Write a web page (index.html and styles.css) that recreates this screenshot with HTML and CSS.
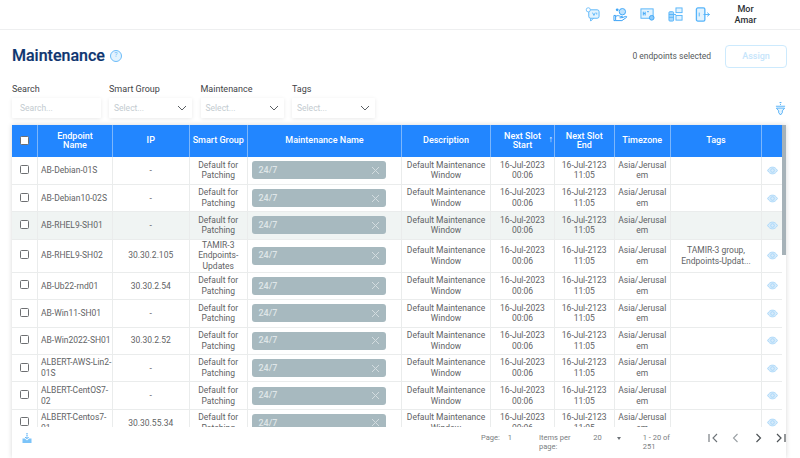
FILE: index.html
```html
<!DOCTYPE html>
<html lang="en">
<head>
<meta charset="utf-8">
<title>Maintenance</title>
<link rel="stylesheet" href="styles.css">
</head>
<body>
<svg class="defs" width="0" height="0" aria-hidden="true">
  <symbol id="eye" viewBox="0 0 12 9"><path d="M.6 4.5C2 2 3.900.8 6 .8s4 1.200 5.400 3.700C10 7 8.100 8.200 6 8.200S2 7 .6 4.500z" fill="#d6ebfb" stroke="#9ed2f8" stroke-width=".8"/><circle cx="6" cy="4.500" r="2" fill="none" stroke="#9ed2f8" stroke-width=".8"/></symbol>
  <symbol id="x" viewBox="0 0 9 9"><path d="M1 1l7 7M8 1L1 8" stroke="#d3dcdf" stroke-width="1" fill="none"/></symbol>
</svg>
<header class="topbar">
  <svg class="ticon" viewBox="0 0 16 16"><rect x="4" y="3" width="11" height="9" rx="2" fill="#e3f3fe" stroke="#55b4fa"/><circle cx="3.500" cy="3" r="2.200" fill="#fff" stroke="#55b4fa" stroke-width=".8"/><path d="M6 12v3l3-3M8 6l1.500 3L11 6M12.500 6v2" fill="none" stroke="#55b4fa"/></svg>
  <svg class="ticon" viewBox="0 0 16 16"><circle cx="10" cy="5" r="3.400" fill="#bfe2fc" stroke="#3ea6f7"/><circle cx="4.500" cy="3" r="1.500" fill="#3ea6f7"/><path d="M1 9h1.800v5.500H1zM3 10c2-1.500 3.500-.5 5 0h2l-1 1.500H7M9.500 11.500l4-1.500c1-.2 1.500.5 1 1l-5 3.500H3" fill="none" stroke="#2f9cf5" stroke-width="1"/></svg>
  <svg class="ticon" viewBox="0 0 16 16"><rect x="1" y="2" width="13" height="10" fill="#e3f3fe" stroke="#55b4fa"/><path d="M3.500 5v4M3.500 7h2M5.500 5v4M7.500 5h2" stroke="#3ea6f7" fill="none"/><circle cx="12.500" cy="11.500" r="2.500" fill="#8ccbfa" stroke="#3ea6f7"/></svg>
  <svg class="ticon" viewBox="0 0 16 16"><rect x="1" y="5" width="5" height="10" rx="1" fill="#a8d8fb" stroke="#55b4fa"/><rect x="8.500" y="1" width="6.500" height="5" fill="#e3f3fe" stroke="#55b4fa"/><rect x="8.500" y="9" width="6.500" height="5" fill="#e3f3fe" stroke="#55b4fa"/><path d="M6 8h2.500M1 8h5M1 11h5" stroke="#55b4fa"/></svg>
  <svg class="ticon" viewBox="0 0 16 16"><rect x="1.500" y="1" width="9" height="14" rx="1.500" fill="#e3f3fe" stroke="#55b4fa" stroke-width="1.400"/><path d="M4.500 6v4M9 8h6.500M13 6l2.500 2-2.500 2" fill="none" stroke="#55b4fa"/></svg>
  <div class="user">Mor Amar</div>
</header>
<main class="page">
  <div class="title-row">
    <h1 class="title">Maintenance</h1>
    <span class="help">?</span>
    <span class="selected">0 endpoints selected</span>
    <button class="assign">Assign</button>
  </div>
  <div class="filter-row">
    <div class="filter filter-search"><label>Search</label><div class="box"><span class="ph ph-search">Search...</span></div></div>
    <div class="filter"><label>Smart Group</label><div class="box"><span class="ph">Select...</span><svg class="chev" viewBox="0 0 10 6"><path d="M1 1l4 4 4-4" fill="none" stroke="#5a5f63"/></svg></div></div>
    <div class="filter"><label>Maintenance</label><div class="box"><span class="ph">Select...</span><svg class="chev" viewBox="0 0 10 6"><path d="M1 1l4 4 4-4" fill="none" stroke="#5a5f63"/></svg></div></div>
    <div class="filter"><label>Tags</label><div class="box"><span class="ph">Select...</span><svg class="chev" viewBox="0 0 10 6"><path d="M1 1l4 4 4-4" fill="none" stroke="#5a5f63"/></svg></div></div>
    <svg class="funnel" viewBox="0 0 12 15"><path d="M5 .5h2M6 2v1" stroke="#3ea6f7"/><path d="M1 4.500h10M1.500 6.500h9L8 9.500v2L6 14l-2-2.500v-2z" fill="#e3f3fe" stroke="#3ea6f7" stroke-width=".9"/></svg>
  </div>
  <section class="card">
    <div class="table-clip">
      <table class="grid">
        <colgroup>
          <col class="c-check"><col class="c-name"><col class="c-ip"><col class="c-group"><col class="c-maint"><col class="c-desc"><col class="c-start"><col class="c-end"><col class="c-tz"><col class="c-tags"><col class="c-act">
        </colgroup>
        <thead>
          <tr>
            <th><span class="hcheck"></span></th>
            <th>Endpoint<br>Name</th><th>IP</th><th>Smart Group</th><th>Maintenance Name</th><th>Description</th>
            <th class="sorted">Next Slot<br>Start<span class="arrow">↑</span></th><th>Next Slot<br>End</th><th>Timezone</th><th>Tags</th><th></th>
          </tr>
        </thead>
        <tbody>
          <tr><td><span class="check"></span></td><td class="left">AB-Debian-01S</td><td>-</td><td>Default for Patching</td><td><div class="chip"><span>24/7</span><svg class="chip-x"><use href="#x"/></svg></div></td><td>Default Maintenance Window</td><td>16-Jul-2023 00:06</td><td>16-Jul-2123 11:05</td><td class="tz">Asia/Jerusalem</td><td></td><td><svg class="eye"><use href="#eye"/></svg></td></tr>
          <tr><td><span class="check"></span></td><td class="left">AB-Debian10-02S</td><td>-</td><td>Default for Patching</td><td><div class="chip"><span>24/7</span><svg class="chip-x"><use href="#x"/></svg></div></td><td>Default Maintenance Window</td><td>16-Jul-2023 00:06</td><td>16-Jul-2123 11:05</td><td class="tz">Asia/Jerusalem</td><td></td><td><svg class="eye"><use href="#eye"/></svg></td></tr>
          <tr class="hl"><td><span class="check"></span></td><td class="left">AB-RHEL9-SH01</td><td>-</td><td>Default for Patching</td><td><div class="chip"><span>24/7</span><svg class="chip-x"><use href="#x"/></svg></div></td><td>Default Maintenance Window</td><td>16-Jul-2023 00:06</td><td>16-Jul-2123 11:05</td><td class="tz">Asia/Jerusalem</td><td></td><td><svg class="eye"><use href="#eye"/></svg></td></tr>
          <tr><td><span class="check"></span></td><td class="left">AB-RHEL9-SH02</td><td>30.30.2.105</td><td>TAMIR-3 Endpoints-Updates</td><td><div class="chip"><span>24/7</span><svg class="chip-x"><use href="#x"/></svg></div></td><td>Default Maintenance Window</td><td>16-Jul-2023 00:06</td><td>16-Jul-2123 11:05</td><td class="tz">Asia/Jerusalem</td><td>TAMIR-3 group, Endpoints-Updat...</td><td><svg class="eye"><use href="#eye"/></svg></td></tr>
          <tr><td><span class="check"></span></td><td class="left">AB-Ub22-rnd01</td><td>30.30.2.54</td><td>Default for Patching</td><td><div class="chip"><span>24/7</span><svg class="chip-x"><use href="#x"/></svg></div></td><td>Default Maintenance Window</td><td>16-Jul-2023 00:06</td><td>16-Jul-2123 11:05</td><td class="tz">Asia/Jerusalem</td><td></td><td><svg class="eye"><use href="#eye"/></svg></td></tr>
          <tr><td><span class="check"></span></td><td class="left">AB-Win11-SH01</td><td>-</td><td>Default for Patching</td><td><div class="chip"><span>24/7</span><svg class="chip-x"><use href="#x"/></svg></div></td><td>Default Maintenance Window</td><td>16-Jul-2023 00:06</td><td>16-Jul-2123 11:05</td><td class="tz">Asia/Jerusalem</td><td></td><td><svg class="eye"><use href="#eye"/></svg></td></tr>
          <tr><td><span class="check"></span></td><td class="left">AB-Win2022-SH01</td><td>30.30.2.52</td><td>Default for Patching</td><td><div class="chip"><span>24/7</span><svg class="chip-x"><use href="#x"/></svg></div></td><td>Default Maintenance Window</td><td>16-Jul-2023 00:06</td><td>16-Jul-2123 11:05</td><td class="tz">Asia/Jerusalem</td><td></td><td><svg class="eye"><use href="#eye"/></svg></td></tr>
          <tr><td><span class="check"></span></td><td class="left">ALBERT-AWS-Lin2-01S</td><td>-</td><td>Default for Patching</td><td><div class="chip"><span>24/7</span><svg class="chip-x"><use href="#x"/></svg></div></td><td>Default Maintenance Window</td><td>16-Jul-2023 00:06</td><td>16-Jul-2123 11:05</td><td class="tz">Asia/Jerusalem</td><td></td><td><svg class="eye"><use href="#eye"/></svg></td></tr>
          <tr><td><span class="check"></span></td><td class="left">ALBERT-CentOS7-02</td><td>-</td><td>Default for Patching</td><td><div class="chip"><span>24/7</span><svg class="chip-x"><use href="#x"/></svg></div></td><td>Default Maintenance Window</td><td>16-Jul-2023 00:06</td><td>16-Jul-2123 11:05</td><td class="tz">Asia/Jerusalem</td><td></td><td><svg class="eye"><use href="#eye"/></svg></td></tr>
          <tr><td><span class="check"></span></td><td class="left">ALBERT-Centos7-01</td><td>30.30.55.34</td><td>Default for Patching</td><td><div class="chip"><span>24/7</span><svg class="chip-x"><use href="#x"/></svg></div></td><td>Default Maintenance Window</td><td>16-Jul-2023 00:06</td><td>16-Jul-2123 11:05</td><td class="tz">Asia/Jerusalem</td><td></td><td><svg class="eye"><use href="#eye"/></svg></td></tr>
        </tbody>
      </table>
      <div class="scrollbar"></div>
    </div>
    <footer class="pager">
      <svg class="export" viewBox="0 0 10 10"><path d="M5 0v5.500M3.300 4L5 6l1.700-2" fill="none" stroke="#3ea6f7" stroke-dasharray="1.300 .5"/><path d="M.5 5.500h2.500l2 2 2-2h2.500V10H.5z" fill="#7cc4f9"/></svg>
      <span class="pg-page">Page:</span><span class="pg-num">1</span>
      <span class="pg-items">Items per page:</span><span class="pg-size">20</span><span class="pg-caret"></span>
      <span class="pg-range">1 - 20 of 251</span>
      <div class="pg-nav">
        <svg viewBox="0 0 11 10"><path d="M1 1v8M9 1L5 5l4 4" fill="none" stroke="#6d7378" stroke-width="1.100"/></svg>
        <svg viewBox="0 0 11 10"><path d="M7.500 1L3.500 5l4 4" fill="none" stroke="#9aa0a4" stroke-width="1.100"/></svg>
        <svg viewBox="0 0 11 10"><path d="M3.500 1l4 4-4 4" fill="none" stroke="#4d5256" stroke-width="1.200"/></svg>
        <svg viewBox="0 0 11 10"><path d="M2 1l4 4-4 4M10 1v8" fill="none" stroke="#4d5256" stroke-width="1.200"/></svg>
      </div>
    </footer>
  </section>
</main>
</body>
</html>
```

FILE: styles.css
```css
* { box-sizing: border-box; }
html, body { margin: 0; height: 100%; overflow: hidden; background: #fff; }
body { font-family: Roboto, "Liberation Sans", sans-serif; color: #5b5f62; font-size: 8.5px; }
.defs { position: absolute; }

.topbar { height: 30px; display: flex; align-items: center; border-bottom: 1px solid #eeeff0; padding-left: 585px; }
.ticon { width: 15px; height: 15px; margin-right: 12.500px; flex: none; }
.user { width: 36px; margin-left: 5px; text-align: center; font-size: 9px; font-weight: 500; line-height: 10.500px; color: #2b2f33; }

.page { padding: 0 14px 0 12px; }
.title-row { height: 52px; display: flex; align-items: center; }
.title { margin: 0; font-size: 16px; line-height: 20px; font-weight: 500; color: #0e3570; -webkit-text-stroke: .2px #0e3570; }
.help { width: 12px; height: 12px; margin-left: 5px; border-radius: 50%; border: 1.500px solid #6cbcf9; background: #e3f3fe; color: #6cbcf9; font-size: 7px; line-height: 9px; text-align: center; }
.selected { margin-left: auto; margin-right: 14px; font-size: 8.500px; color: #55595c; }
.assign { width: 62px; height: 23px; border: 1px solid #cdeafd; border-radius: 4px; background: #fff; color: #c6e5fb; font: 500 9px Roboto, sans-serif; margin-right: -1px; padding: 0; }

.filter-row { display: flex; gap: 8.500px; height: 43px; position: relative; }
.filter { width: 83px; display: flex; flex-direction: column; }
.filter-search { width: 88.500px; }
.filter label { font-size: 9px; line-height: 12px; height: 16px; padding-top: 1px; color: #3f4347; }
.box { height: 20px; background: #fff; box-shadow: 0 1px 4px rgba(0,0,0,.09); display: flex; align-items: center; justify-content: space-between; padding: 0 5px; border-radius: 1px; }
.ph { font-size: 8.500px; color: #c3cbd0; }
.ph-search { padding-left: 3px; }
.chev { width: 10px; height: 6px; }
.funnel { position: absolute; right: 0; top: 20px; width: 11px; height: 14px; }

.card { box-shadow: 0 0 5px rgba(0,0,0,.16); height: 333px; }
.table-clip { height: 302px; overflow: hidden; position: relative; padding-right: 4px; }
.grid { width: 770px; table-layout: fixed; border-collapse: collapse; }
.c-check { width: 25.500px; } .c-name { width: 75px; } .c-ip { width: 76.500px; } .c-group { width: 58.500px; }
.c-maint { width: 154px; } .c-desc { width: 89px; } .c-start { width: 64px; } .c-end { width: 59.500px; }
.c-tz { width: 56.500px; } .c-tags { width: 91px; } .c-act { width: 20.500px; }

.grid th { background: #2286ff; color: #fff; height: 32px; font-size: 9px; font-weight: 500; line-height: 9.500px; padding: 0 3px; border-left: 1px solid #7db6fb; position: relative; }
.grid th:first-child { border-left: 0; }
.sorted .arrow { position: absolute; right: 1px; top: 10px; font-size: 9px; }
.grid td { height: 27.400px; padding: 0 4px; text-align: center; line-height: 10.700px; border: 1px solid #eaecec; border-top: 0; color: #5f6365; overflow: hidden; }
.grid td:first-child { border-left: 0; }
.grid td:last-child { border-right: 0; padding: 0; }
.grid td.left { text-align: left; padding: 0 0 0 3px; }
.grid td.tz { word-break: break-all; padding: 0 3px; }
.hl td { background: #f0f4f3; }
.check, .hcheck { display: block; width: 9px; height: 9px; margin: 0 auto 2px; border: 1px solid #6d6f72; border-radius: 1.500px; background: #fff; }
.chip { height: 18px; margin: 0 -1px 0 0; background: #a7b9bf; border-radius: 3px; display: flex; align-items: center; justify-content: space-between; padding: 0 6px 0 6.500px; color: #dfe6e8; font-size: 9px; font-weight: 500; width: 134px; }
.chip-x { width: 9px; height: 9px; }
.eye { display: block; width: 11px; height: 9px; margin: 0 auto; }
.scrollbar { position: absolute; right: 0; top: 0; width: 4px; height: 130px; background: #a6b2b8; }

.pager { height: 31px; position: relative; display: flex; align-items: flex-start; padding-top: 4px; font-size: 7.500px; color: #7a7e81; }
.export { width: 10px; height: 10px; margin: 2px 0 0 10px; flex: none; }
.pg-page { margin-left: 449px; margin-top: 2px; }
.pg-num { margin-left: 8px; margin-top: 2px; }
.pg-items { margin-left: 27px; margin-top: 2px; }
.pg-size { margin-left: 5px; margin-top: 2px; }
.pg-caret { margin: 6px 0 0 15px; border: 2.500px solid transparent; border-top: 3px solid #6d7378; border-bottom: 0; }
.pg-range { margin-left: 22px; margin-top: 2px; }
.pg-nav { display: flex; gap: 11.500px; margin-left: 25px; margin-top: 2px; }
.pg-nav svg { width: 11px; height: 10px; }
```
